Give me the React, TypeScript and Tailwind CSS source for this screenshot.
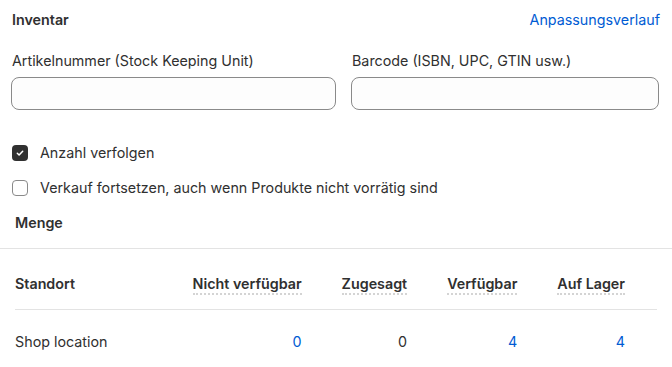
import React from "react";

const cols = [
  { label: "Nicht verfügbar", value: "0", blue: true },
  { label: "Zugesagt", value: "0", blue: false },
  { label: "Verfügbar", value: "4", blue: true },
  { label: "Auf Lager", value: "4", blue: true },
];

const Check = ({ checked }: { checked?: boolean }) =>
  checked ? (
    <span className="flex h-4 w-4 items-center justify-center rounded-[4px] bg-[#303030]">
      <svg width="10" height="10" viewBox="0 0 10 10" fill="none">
        <path d="M2.3 5.2l1.8 1.8 3.6-3.8" stroke="#fff" strokeWidth="1.5" strokeLinecap="round" strokeLinejoin="round" />
      </svg>
    </span>
  ) : (
    <span className="h-4 w-4 rounded-[4px] border border-[#8a8a8a] bg-white" />
  );

export default function App() {
  return (
    <div className="min-h-screen w-[672px] bg-white text-[14.3px] leading-5 text-[#303030]" style={{ fontFamily: "Inter, 'Noto Sans', sans-serif" }}>
      <div className="px-[11px] pt-[10px]">
        <div className="flex items-center justify-between">
          <h2 className="pl-px font-semibold">Inventar</h2>
          <a className="pr-[1px] text-[#005bd3]">Anpassungsverlauf</a>
        </div>

        <div className="mt-[21px] grid grid-cols-[325px_308px] gap-x-[15px]">
          <label className="flex flex-col gap-[6px]">
            <span className="pl-px">Artikelnummer (Stock Keeping Unit)</span>
            <input className="h-[33px] rounded-lg border border-[#8a8a8a] bg-[#fdfdfd] px-3" />
          </label>
          <label className="flex flex-col gap-[6px]">
            <span className="pl-px">Barcode (ISBN, UPC, GTIN usw.)</span>
            <input className="h-[33px] rounded-lg border border-[#8a8a8a] bg-[#fdfdfd] px-3" />
          </label>
        </div>

        <div className="mt-[33px] flex flex-col gap-[15px] pl-px">
          <div className="flex items-center gap-3">
            <Check checked />
            <span>Anzahl verfolgen</span>
          </div>
          <div className="flex items-center gap-3">
            <Check />
            <span>Verkauf fortsetzen, auch wenn Produkte nicht vorrätig sind</span>
          </div>
        </div>
      </div>

      <h3 className="mt-[15px] px-[15px] font-semibold">Menge</h3>
      <div className="mt-[15px] border-t border-[#e3e3e3]" />

      <div className="px-[15px]">
        <div className="grid grid-cols-[1fr_auto_auto_auto_auto] gap-x-10 border-b border-[#e3e3e3] pb-[14px] pr-[32px] pt-[25px] font-semibold">
          <span>Standort</span>
          {cols.map((c) => (
            <span key={c.label} className="justify-self-end border-b-2 border-dotted border-[#d4d4d4] leading-[19px]">
              {c.label}
            </span>
          ))}
        </div>
        <div className="grid grid-cols-[1fr_auto_auto_auto_auto] gap-x-10 pr-[32px] pt-[22px]">
          <span>Shop location</span>
          {cols.map((c) => (
            <span key={c.label} className="justify-self-end">
              <span className="invisible block h-0 overflow-hidden font-semibold">{c.label}</span>
              <span className={`block text-right ${c.blue ? "text-[#005bd3]" : ""}`}>{c.value}</span>
            </span>
          ))}
        </div>
      </div>
    </div>
  );
}
